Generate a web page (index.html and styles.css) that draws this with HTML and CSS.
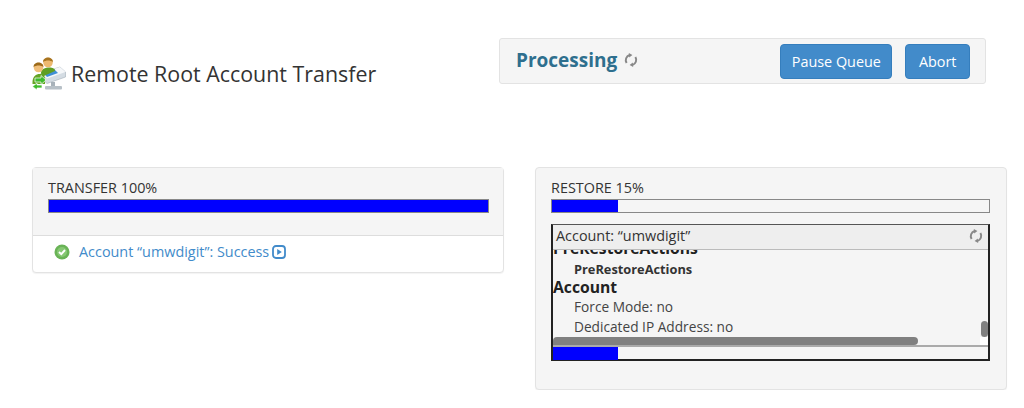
FILE: index.html
```html
<!DOCTYPE html>
<html lang="en">
  <head>
    <meta charset="UTF-8" />
    <title>Remote Root Account Transfer</title>
    <link rel="stylesheet" href="styles.css">
  </head>
  <body>
    <div class="top">
      <h1 class="page_title">
        <svg class="title_icon" width="34" height="36" viewBox="0 0 34 36">
          <rect x="19" y="27" width="4" height="5" fill="#a8b2ba"/>
          <rect x="13" y="31" width="17" height="3.5" rx="1" fill="#b7c0c7"/>
          <path d="M9 18 L28 12 L33.5 17 L33.5 22 L15 28.5 L9 23Z" fill="#d4dce3" stroke="#a3afb8" stroke-width=".6"/>
          <path d="M9 18 L28 12 L33.5 17 L15 23.5Z" fill="#f5f7f9"/>
          <path d="M11 17.5 L22 14 L26 18 L15 22Z" fill="#3f8fd6"/>
          <path d="M9 18 C9 11 24 11 23 16 L14 20 L10 22Z" fill="#5f9e22"/>
          <circle cx="16" cy="7.5" r="4.8" fill="#edb96f"/>
          <path d="M11 7 C11 1 21 1 21 7 C18 5 14 5 11 7Z" fill="#a8741f"/>
          <path d="M0.5 27 C0.5 17 13 17 13 24 L13 29 L0.5 29Z" fill="#64a524"/>
          <circle cx="6.5" cy="12.5" r="4.8" fill="#f0bf7a"/>
          <path d="M1.5 12 C1.5 6 11.5 6 11.5 12 C8.5 10 4.5 10 1.5 12Z" fill="#9c6a1a"/>
          <path d="M3 23 H9 V20.5 L14 25 L9 29.5 V27 H3Z" fill="#3fbb2c" stroke="#fff" stroke-width=".7"/>
          <path d="M10 30 H5 V28 L0.5 31.5 L5 35 V33 H10Z" fill="#3fbb2c" stroke="#fff" stroke-width=".7"/>
        </svg>
        Remote Root Account Transfer
      </h1>
      <div class="queue">
        <span class="queue_status">Processing</span>
        <svg class="spin spin_queue" viewBox="0 0 14 14"><use href="#spin"/></svg>
        <div class="queue_btns">
          <button class="btn">Pause Queue</button>
          <button class="btn btn_abort">Abort</button>
        </div>
      </div>
    </div>

    <div class="cols">
      <div class="card">
        <div class="card_head card_head_left">
          <div class="label">TRANSFER 100%</div>
          <div class="bar"><div class="bar_fill" style="width: 100%"></div></div>
        </div>
        <div class="result">
          <svg class="ok" width="16" height="16" viewBox="0 0 16 16">
            <circle cx="8" cy="8" r="7.5" fill="#69b356"/>
            <circle cx="8" cy="8" r="5" fill="#86c873"/>
            <path d="M5 8 L7.3 10.2 L11 6" fill="none" stroke="#fff" stroke-width="1.9"/>
          </svg>
          <a class="result_link" href="#">Account “umwdigit”: Success</a>
          <svg class="play" width="14" height="14" viewBox="0 0 14 14">
            <rect x="1" y="1" width="12" height="12" rx="3" fill="none" stroke="#428bca" stroke-width="1.8"/>
            <path d="M5.2 4 L9.8 7 L5.2 10Z" fill="#428bca"/>
          </svg>
        </div>
      </div>

      <div class="card card_right">
        <div class="label">RESTORE 15%</div>
        <div class="bar"><div class="bar_fill" style="width: 15%"></div></div>
        <div class="log">
          <div class="log_head">
            <span>Account: “umwdigit”</span>
            <svg class="spin" viewBox="0 0 14 14"><use href="#spin"/></svg>
          </div>
          <div class="log_body">
            <div class="log_h log_h_cut">PreRestoreActions</div>
            <div class="log_sub">PreRestoreActions</div>
            <div class="log_h">Account</div>
            <div class="log_line">Force Mode: no</div>
            <div class="log_line">Dedicated IP Address: no</div>
            <div class="scroll_h"></div>
            <div class="scroll_corner"></div>
            <div class="scroll_v"></div>
          </div>
          <div class="log_bar"><div class="bar_fill" style="width: 15%"></div></div>
        </div>
      </div>
    </div>

    <svg width="0" height="0" class="defs">
      <symbol id="spin" viewBox="0 0 14 14">
        <path d="M2.6 10 A5.4 5.4 0 0 1 5.6 2 M11.4 4 A5.4 5.4 0 0 1 8.4 12" fill="none" stroke="currentColor" stroke-width="2"/>
        <path d="M4.8 0 L8.4 2 L5.2 4.4Z M9.2 14 L5.6 12 L8.8 9.6Z" fill="currentColor"/>
      </symbol>
    </svg>
  </body>
</html>
```

FILE: styles.css
```css
body {
  margin: 0;
  padding: 38px 17px 0 32px;
  font-family: "Open Sans", "Liberation Sans", sans-serif;
  font-size: 14.4px;
  color: #333;
  background: #fff;
}

.defs {
  display: block;
  height: 0;
}

.top {
  display: flex;
  align-items: flex-start;
}

.page_title {
  display: flex;
  align-items: center;
  gap: 5px;
  width: 467px;
  height: 36px;
  margin: 17px 0 0;
  font-size: 21.4px;
  font-weight: 400;
  white-space: nowrap;
}

.title_icon {
  flex: none;
}

.queue {
  display: flex;
  align-items: center;
  box-sizing: border-box;
  width: 487px;
  height: 46px;
  padding: 0 15px 0 16px;
  background: #f5f5f5;
  border: 1px solid #e3e3e3;
  border-radius: 3px;
}

.queue_status {
  margin-top: -3px;
  font-size: 19px;
  font-weight: 700;
  color: #2e6f8e;
}

.spin {
  width: 14px;
  height: 14px;
  color: #888;
}

.spin_queue {
  margin: -3px 0 0 7px;
}

.queue_btns {
  display: flex;
  gap: 13px;
  margin-left: auto;
}

.btn {
  height: 35px;
  padding: 0 10.5px;
  font-family: inherit;
  font-size: 14.4px;
  color: #fff;
  background: #428bca;
  border: 1px solid #357ebd;
  border-radius: 4px;
}

.btn_abort {
  padding: 0 12.5px;
}

.cols {
  display: flex;
  align-items: flex-start;
  gap: 31px;
  margin-top: 76px;
}

.card {
  box-sizing: border-box;
  width: 472px;
  background: #fff;
  border: 1px solid #e3e3e3;
  border-radius: 4px;
  box-shadow: 0 1px 1px rgba(0, 0, 0, 0.05);
}

.card_head_left {
  height: 68px;
  padding: 10px 15px 0;
  box-sizing: border-box;
  background: #f5f5f5;
  border-bottom: 1px solid #ddd;
}

.card_right {
  height: 223px;
  padding: 10px 16px 0 15px;
  background: #f5f5f5;
}

.label {
  height: 21px;
  line-height: 20px;
}

.bar {
  box-sizing: border-box;
  height: 14px;
  background: #f5f5f5;
  border: 1px solid #888;
}

.card_head_left .bar {
  width: 441px;
}

.card_right .bar {
  width: 439px;
}

.bar_fill {
  height: 100%;
  background: #00f;
}

.result {
  display: flex;
  align-items: center;
  box-sizing: border-box;
  height: 36px;
  padding: 0 0 5px 21px;
}

.ok {
  flex: none;
}

.result_link {
  margin-left: 9px;
  color: #428bca;
  text-decoration: none;
}

.play {
  margin: 0 0 0 3px;
}

.log {
  box-sizing: border-box;
  width: 439px;
  height: 137px;
  margin-top: 11px;
  background: #f5f5f5;
  border: 1px solid #555;
  border-right: 2px solid #222;
  border-bottom: 2px solid #222;
  border-left: 2px solid #222;
}

.log_head {
  display: flex;
  align-items: center;
  justify-content: space-between;
  box-sizing: border-box;
  height: 25px;
  padding: 0 5px 3px 3px;
  background: #eee;
  border-bottom: 1px solid #bbb;
}

.log_body {
  position: relative;
  box-sizing: border-box;
  height: 97px;
  overflow: hidden;
  border-bottom: 2px solid #aaa;
  white-space: nowrap;
}

.log_h {
  height: 20px;
  line-height: 20px;
  font-size: 15.7px;
  font-weight: 700;
  color: #222;
}

.log_h_cut {
  margin-top: -12px;
  margin-bottom: 2px;
}

.log_sub {
  height: 17px;
  line-height: 19px;
  padding-left: 21px;
  font-size: 12.8px;
  font-weight: 700;
  color: #333;
}

.log_line {
  height: 20px;
  line-height: 20px;
  padding-left: 21px;
  font-size: 13.7px;
  color: #444;
}

.scroll_h {
  position: absolute;
  left: 0;
  bottom: 0;
  width: 365px;
  height: 8px;
  background: #808080;
  border-radius: 4px 4px 4px 0;
}

.scroll_corner {
  position: absolute;
  right: 0;
  bottom: 0;
  width: 8px;
  height: 8px;
  background: #fff;
}

.scroll_v {
  position: absolute;
  right: 0;
  bottom: 8px;
  width: 7px;
  height: 16px;
  background: #808080;
  border-radius: 4px;
}

.log_bar {
  height: 13px;
}
```
